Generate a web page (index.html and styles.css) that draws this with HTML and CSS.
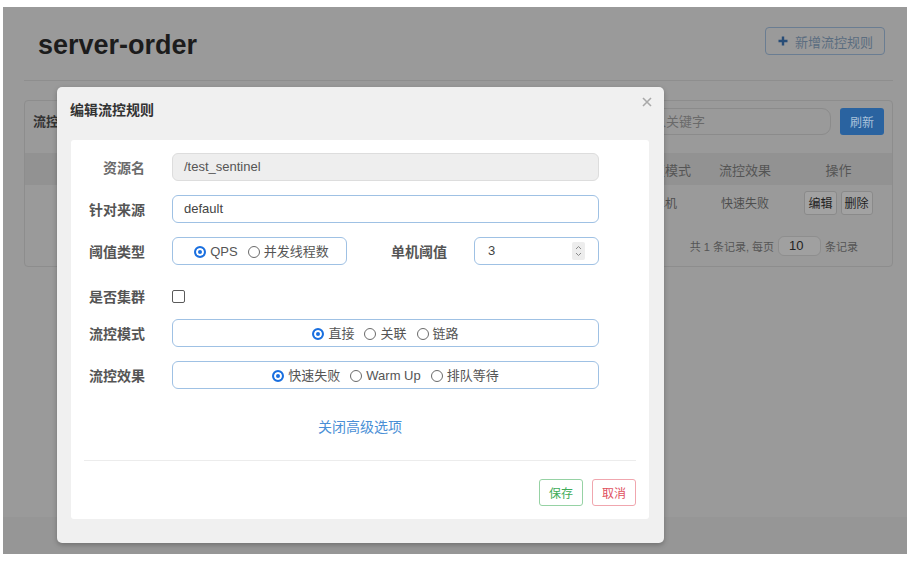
FILE: index.html
```html
<!DOCTYPE html>
<html lang="zh-CN">
<head>
<meta charset="utf-8">
<title>server-order</title>
<link rel="stylesheet" href="styles.css">
</head>
<body>
<div class="frame">
  <header class="page-header">
    <h1 class="page-title">server-order</h1>
    <button class="btn-add" type="button">
      <svg class="plus" width="10" height="10" viewBox="0 0 10 10"><path d="M5 0.5v9M0.5 5h9" stroke="#284d77" stroke-width="2.4" fill="none"/></svg>
      <span>新增流控规则</span>
    </button>
  </header>

  <section class="panel">
    <div class="panel-top">
      <span class="panel-title">流控规则</span>
      <div class="search">请输入关键字</div>
      <button class="btn-refresh" type="button">刷新</button>
    </div>
    <div class="table">
      <div class="tr th">
        <span></span><span></span><span></span><span></span><span></span><span>阈值模式</span><span>流控效果</span><span>操作</span>
      </div>
      <div class="tr">
        <span></span><span></span><span></span><span></span><span></span><span>单机</span><span>快速失败</span>
        <span class="ops"><button class="btn-op" type="button">编辑</button><button class="btn-op" type="button">删除</button></span>
      </div>
    </div>
    <div class="pager">
      <span>共 1 条记录, 每页</span>
      <span class="pager-input">10</span>
      <span>条记录</span>
    </div>
  </section>

  <div class="page-footer"></div>

  <div class="modal">
    <div class="modal-head">
      <h2 class="modal-title">编辑流控规则</h2>
      <svg class="modal-close" width="10" height="10" viewBox="0 0 10 10"><path d="M1 1L9 9M9 1L1 9" stroke="#a9a9a9" stroke-width="1.6" fill="none"/></svg>
    </div>
    <div class="modal-body">
      <div class="row">
        <label class="lbl lbl-light">资源名</label>
        <div class="field"><div class="input input-disabled">/test_sentinel</div></div>
      </div>
      <div class="row">
        <label class="lbl">针对来源</label>
        <div class="field"><div class="input">default</div></div>
      </div>
      <div class="row">
        <label class="lbl">阈值类型</label>
        <div class="field field-split">
          <div class="group group-small">
            <span class="opt"><span class="radio on"></span>QPS</span>
            <span class="opt"><span class="radio"></span>并发线程数</span>
          </div>
          <label class="lbl lbl-inline">单机阈值</label>
          <div class="input input-number">
            <span>3</span>
            <svg class="spin" width="13" height="18" viewBox="0 0 13 18"><rect x="0" y="0" width="13" height="18" rx="2" fill="#ededed"/><path d="M4 7L6.5 4.5L9 7M4 11L6.5 13.5L9 11" stroke="#8a8a8a" stroke-width="1" fill="none"/></svg>
          </div>
        </div>
      </div>
      <div class="row row-check">
        <label class="lbl">是否集群</label>
        <div class="field"><span class="checkbox"></span></div>
      </div>
      <div class="row">
        <label class="lbl">流控模式</label>
        <div class="field">
          <div class="group">
            <span class="opt"><span class="radio on"></span>直接</span>
            <span class="opt"><span class="radio"></span>关联</span>
            <span class="opt"><span class="radio"></span>链路</span>
          </div>
        </div>
      </div>
      <div class="row">
        <label class="lbl">流控效果</label>
        <div class="field">
          <div class="group">
            <span class="opt"><span class="radio on"></span>快速失败</span>
            <span class="opt"><span class="radio"></span>Warm Up</span>
            <span class="opt"><span class="radio"></span>排队等待</span>
          </div>
        </div>
      </div>
      <div class="toggle-link">关闭高级选项</div>
      <div class="divider"></div>
      <div class="actions">
        <button class="btn btn-save" type="button">保存</button>
        <button class="btn btn-cancel" type="button">取消</button>
      </div>
    </div>
  </div>
</div>
</body>
</html>
```

FILE: styles.css
```css
* { box-sizing: border-box; }

html, body {
  margin: 0;
  padding: 0;
  background: #ffffff;
  font-family: "Liberation Sans", "Noto Sans CJK SC", sans-serif;
}

button {
  font-family: inherit;
  cursor: default;
}

.frame {
  position: relative;
  margin: 7px 0 0 3px;
  width: 904px;
  height: 547px;
  background: #9a9a9a;
  overflow: hidden;
  display: flex;
  flex-direction: column;
}

/* ---------- dimmed page behind the dialog ---------- */
.page-header {
  display: flex;
  justify-content: space-between;
  align-items: flex-start;
  margin: 0 14px 0 21px;
  padding: 20px 8px 17px 14px;
  border-bottom: 1px solid #8e8e8e;
}

.page-title {
  margin: 0;
  font-size: 27px;
  line-height: 36px;
  font-weight: bold;
  color: #1c1c1c;
}

.btn-add {
  display: flex;
  align-items: center;
  gap: 7px;
  height: 28px;
  padding: 0 11px 0 12px;
  background: transparent;
  border: 1px solid #6a7d92;
  border-radius: 4px;
  color: #5b6d80;
  font-size: 13px;
}

.panel {
  margin: 19px 14px 0 21px;
  border: 1px solid #8d8d8d;
  border-radius: 4px;
}

.panel-top {
  display: flex;
  align-items: center;
  padding: 7px 8px;
}

.panel-title {
  font-size: 13px;
  font-weight: bold;
  color: #333;
  line-height: 27px;
}

.search {
  margin-left: auto;
  width: 220px;
  height: 27px;
  padding-left: 15px;
  border: 1px solid #8b8b8b;
  border-radius: 9px;
  font-size: 13px;
  line-height: 25px;
  color: #6a6a6a;
}

.btn-refresh {
  margin-left: 9px;
  width: 44px;
  height: 27px;
  border: none;
  border-radius: 3px;
  background: #2a63a0;
  color: #a9c1da;
  font-size: 12px;
}

.table {
  margin-top: 11px;
}

.tr {
  display: grid;
  grid-template-columns: repeat(5, 120px) 80px 80px 1fr;
  align-items: center;
  height: 35px;
  font-size: 12px;
  color: #4e4e4e;
}

.tr > span {
  text-align: center;
  white-space: nowrap;
}

.tr.th {
  height: 32px;
  background: #929292;
  font-size: 13px;
  color: #555;
}

.ops {
  display: flex;
  justify-content: center;
  gap: 4px;
}

.btn-op {
  height: 24px;
  padding: 0 3px;
  background: #a2a2a2;
  border: 1px solid #8a8a8a;
  border-radius: 3px;
  font-size: 12px;
  color: #222;
}

.pager {
  display: flex;
  justify-content: flex-end;
  align-items: center;
  gap: 4px;
  margin-top: 16px;
  padding: 0 34px 10px 0;
  font-size: 11px;
  color: #555;
}

.pager-input {
  width: 43px;
  height: 20px;
  padding-left: 10px;
  background: #a0a0a0;
  border: 1px solid #8e8e8e;
  border-radius: 6px;
  font-size: 13px;
  line-height: 18px;
  color: #222;
}

.page-footer {
  margin-top: auto;
  height: 37px;
  background: #969696;
}

/* ---------- dialog ---------- */
.modal {
  position: absolute;
  left: 54px;
  top: 80px;
  width: 607px;
  height: 456px;
  background: #f0f0f0;
  border-radius: 5px;
  box-shadow: 0 2px 5px rgba(0, 0, 0, 0.25);
  display: flex;
  flex-direction: column;
}

.modal-head {
  display: flex;
  justify-content: space-between;
  align-items: flex-start;
  height: 53px;
  padding: 13px 12px 0 13px;
}

.modal-title {
  margin: 0;
  font-size: 14px;
  line-height: 20px;
  font-weight: bold;
  color: #333;
}

.modal-close {
  margin-top: -3px;
}

.modal-body {
  flex: 1;
  margin: 0 15px 24px 14px;
  padding: 13px 0 13px;
  background: #ffffff;
  border-radius: 3px;
  display: flex;
  flex-direction: column;
}

.row {
  display: grid;
  grid-template-columns: 74px 1fr;
  column-gap: 27px;
  align-items: center;
  height: 28px;
  margin-bottom: 14px;
  padding-right: 50px;
}

.row-check {
  margin-top: 3px;
  margin-bottom: 9px;
}

.lbl {
  text-align: right;
  font-size: 14px;
  font-weight: bold;
  color: #555;
  white-space: nowrap;
}

.lbl-light {
  color: #6c6c6c;
}

.field {
  display: flex;
  align-items: center;
  height: 28px;
}

.input {
  flex: 1;
  height: 28px;
  padding-left: 11px;
  border: 1px solid #9fc1e4;
  border-radius: 6px;
  font-size: 13px;
  line-height: 26px;
  color: #444;
}

.input-disabled {
  background: #eeeeee;
  border-color: #dddddd;
  color: #555;
}

.input-number {
  display: flex;
  align-items: center;
  justify-content: space-between;
  padding: 0 13px 0 13px;
}

.group {
  flex: 1;
  height: 28px;
  display: flex;
  justify-content: center;
  align-items: center;
  gap: 10px;
  padding-top: 2px;
  border: 1px solid #9fc1e4;
  border-radius: 6px;
  font-size: 13px;
  color: #555;
}

.group-small {
  flex: 0 0 175px;
  padding-left: 4px;
}

.lbl-inline {
  width: 100px;
  margin-right: 27px;
}

.opt {
  display: inline-flex;
  align-items: center;
  gap: 4px;
  white-space: nowrap;
  line-height: 18px;
}

.radio {
  display: inline-block;
  width: 12px;
  height: 12px;
  border: 1px solid #6a6a6a;
  border-radius: 50%;
}

.radio.on {
  border: 2px solid #1a6fdf;
  background: #1a6fdf;
  box-shadow: inset 0 0 0 2px #ffffff;
}

.checkbox {
  display: inline-block;
  width: 13px;
  height: 13px;
  border: 1.5px solid #5a5a5a;
  border-radius: 2px;
}

.toggle-link {
  margin-top: 14px;
  text-align: center;
  font-size: 14px;
  line-height: 20px;
  color: #4a8fd6;
}

.divider {
  margin: 23px 13px 0;
  height: 1px;
  background: #ececec;
}

.actions {
  display: flex;
  justify-content: flex-end;
  gap: 9px;
  margin-top: 18px;
  padding-right: 13px;
}

.btn {
  width: 44px;
  height: 27px;
  background: #ffffff;
  border-radius: 3px;
  font-size: 12px;
  padding: 0;
}

.btn-save {
  border: 1px solid #96d2a4;
  color: #3dab58;
}

.btn-cancel {
  border: 1px solid #f0a6ae;
  color: #e0505e;
}
```
